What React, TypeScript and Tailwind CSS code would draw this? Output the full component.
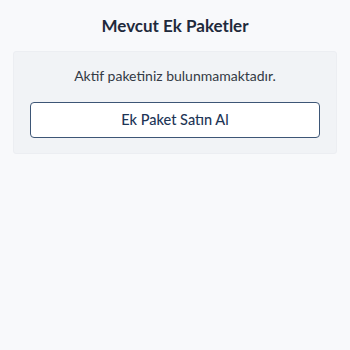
export default function App() {
  return (
    <div className="min-h-screen w-full bg-[#f8f9fb] px-[13px] pt-[14px]" style={{ fontFamily: "Lato, 'Noto Sans', sans-serif" }}>
      <h1 className="text-center text-[17px] font-bold leading-6 text-[#1f2a3c]">Mevcut Ek Paketler</h1>
      <div className="mt-[13px] rounded-[3px] border border-[#eceef2] bg-[#f1f3f6] px-[16px] pt-[14px] pb-[15px]">
        <p className="text-center text-[14px] leading-5 text-[#333a45]">Aktif paketiniz bulunmamaktadır.</p>
        <button className="mt-[16px] flex h-[36px] w-full items-center justify-center rounded-[4px] border border-[#3d5676] bg-white text-[14.5px] font-medium text-[#1d3556]">
          Ek Paket Satın Al
        </button>
      </div>
    </div>
  );
}
